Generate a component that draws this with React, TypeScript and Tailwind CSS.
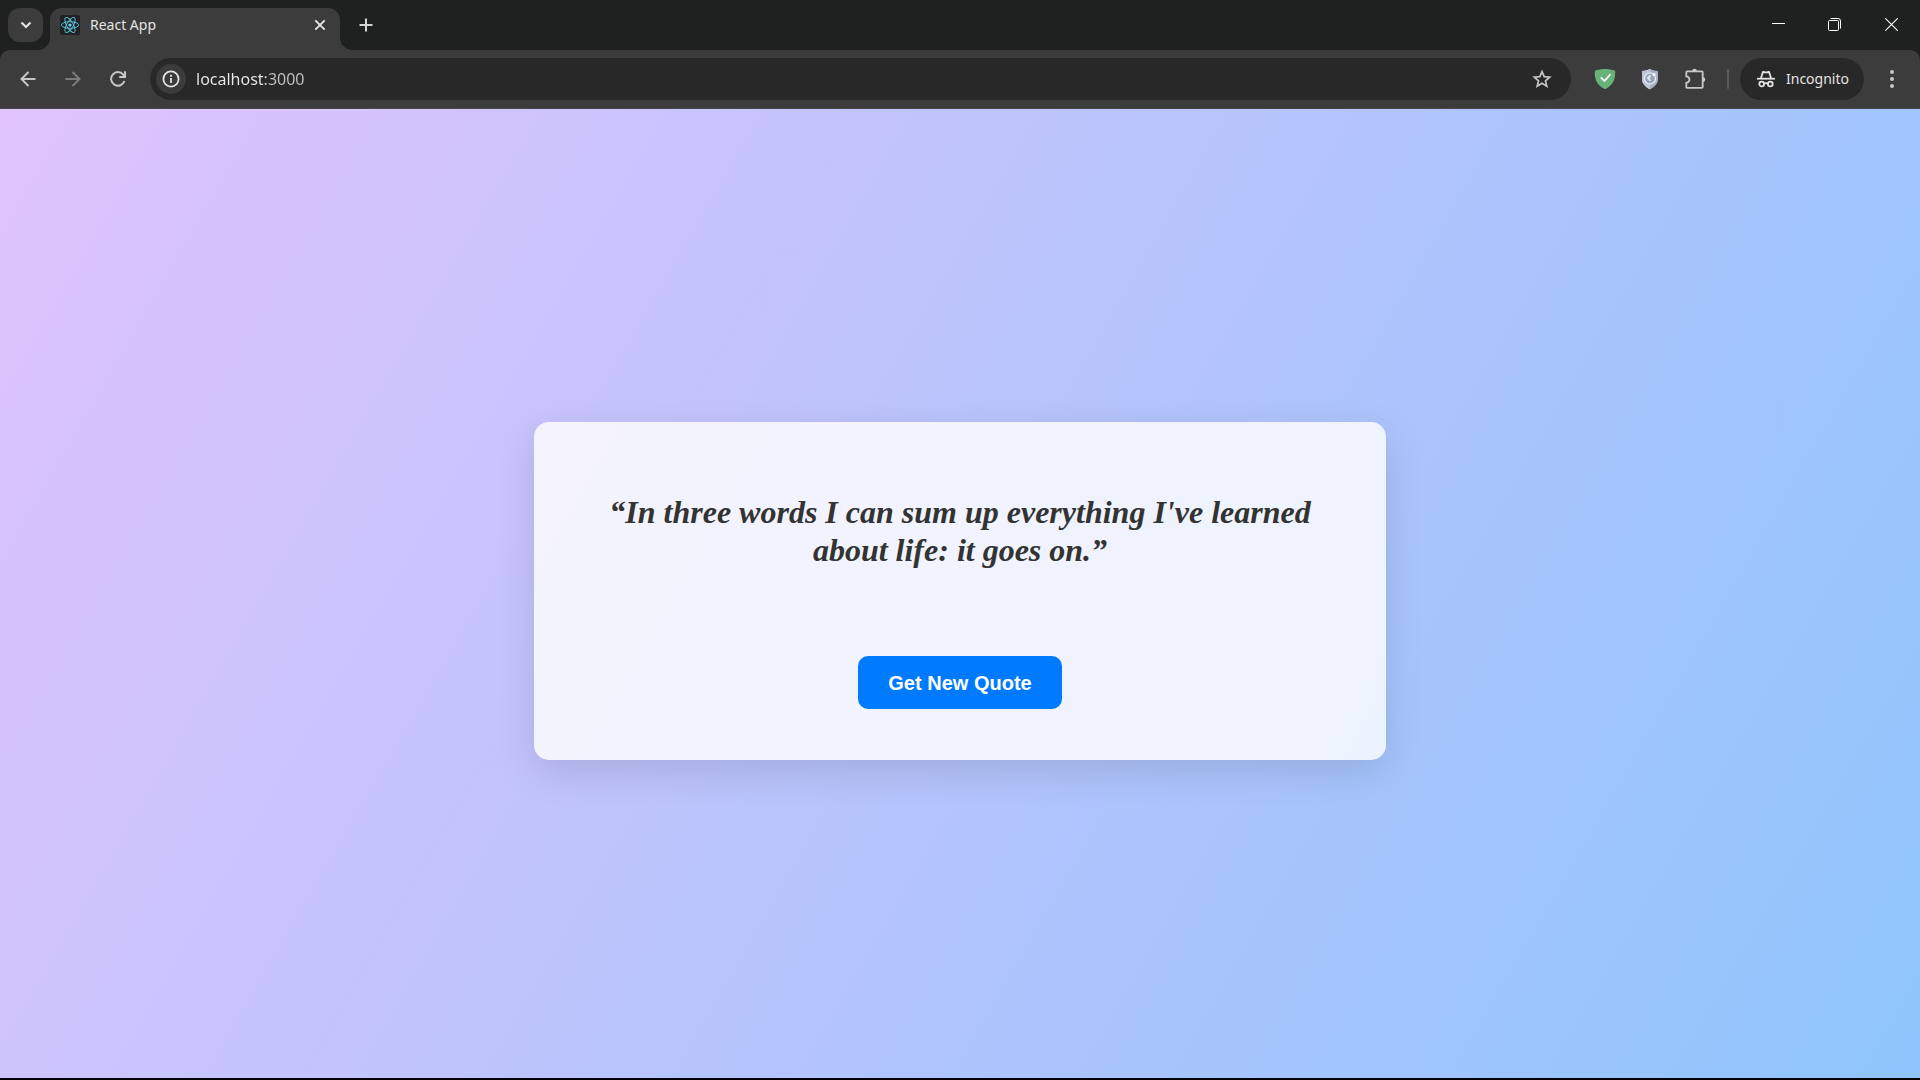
import React from "react";

const stroke = { fill: "none", stroke: "currentColor", strokeWidth: 2 } as const;

function ReactLogo() {
  return (
    <svg viewBox="0 0 20 20" className="size-5 shrink-0" aria-hidden="true">
      <rect width="20" height="20" rx="2" fill="#202122" />
      <g fill="none" stroke="#5bc8e0" strokeWidth="0.9">
        <ellipse cx="10" cy="10" rx="8.6" ry="3.3" />
        <ellipse cx="10" cy="10" rx="8.6" ry="3.3" transform="rotate(60 10 10)" />
        <ellipse cx="10" cy="10" rx="8.6" ry="3.3" transform="rotate(120 10 10)" />
      </g>
      <circle cx="10" cy="10" r="1.6" fill="#61dafb" />
    </svg>
  );
}

function IncognitoIcon() {
  return (
    <svg viewBox="0 0 18 18" className="size-[18px] shrink-0" {...stroke} strokeWidth={1.8} aria-hidden="true">
      <path d="M4 8 5.9 1.9 Q9 3 12.1 1.9 L14 8" strokeLinejoin="round" />
      <path d="M0 8.7H18" />
      <circle cx="4.7" cy="14" r="2.4" />
      <circle cx="13.3" cy="14" r="2.4" />
      <path d="M7 13.6Q9 12.6 11 13.6" />
    </svg>
  );
}

function TabStrip() {
  return (
    <div className="flex h-[50px] items-end bg-[#1f2121] pl-2">
      <button
        aria-label="Search tabs"
        className="mb-2 flex h-[34px] w-[35px] items-center justify-center rounded-xl bg-[#3c3c3c] text-[#e3e3e3]"
      >
        <svg viewBox="0 0 12 12" className="size-3" {...stroke} strokeWidth={2.2} aria-hidden="true">
          <path d="M1.5 3.5 6 8l4.5-4.5" />
        </svg>
      </button>

      <div className="relative ml-[7px] flex h-[42px] w-[290px] items-center rounded-t-xl bg-[#3c3c3c] pr-[10px] pb-2 pl-[10px] before:absolute before:bottom-0 before:-left-3 before:size-3 before:bg-[radial-gradient(circle_at_0_0,transparent_12px,#3c3c3c_12px)] after:absolute after:-right-3 after:bottom-0 after:size-3 after:bg-[radial-gradient(circle_at_100%_0,transparent_12px,#3c3c3c_12px)]">
        <ReactLogo />
        <span className="ml-[10px] flex-1 text-sm text-[#e3e3e3]">React App</span>
        <button aria-label="Close tab" className="flex size-5 items-center justify-center text-[#e8e8e8]">
          <svg viewBox="0 0 12 12" className="size-3" {...stroke} strokeWidth={1.8} aria-hidden="true">
            <path d="m1.3 1.3 9.4 9.4m0-9.4-9.4 9.4" />
          </svg>
        </button>
      </div>

      <button aria-label="New tab" className="mb-[11px] ml-3 flex size-7 items-center justify-center text-[#d5d5d5]">
        <svg viewBox="0 0 14 14" className="size-[14px]" {...stroke} aria-hidden="true">
          <path d="M7 .5v13M.5 7h13" />
        </svg>
      </button>

      <div className="ml-auto flex self-start text-white">
        <button aria-label="Minimize" className="flex h-[49px] w-14 items-center justify-center">
          <svg viewBox="0 0 13 13" className="size-[13px]" {...stroke} strokeWidth={1} aria-hidden="true">
            <path d="M0 5.5h13" />
          </svg>
        </button>
        <button aria-label="Restore" className="flex h-[49px] w-14 items-center justify-center">
          <svg viewBox="0 0 13 13" className="size-[13px]" {...stroke} strokeWidth={1} aria-hidden="true">
            <rect x=".5" y="2.5" width="10" height="10" rx="1" />
            <path d="M2.5 .5H10a2.5 2.5 0 0 1 2.5 2.5V10.5" />
          </svg>
        </button>
        <button aria-label="Close window" className="flex h-[49px] w-[58px] items-center justify-center">
          <svg viewBox="0 0 13 13" className="size-[13px]" {...stroke} strokeWidth={1.1} aria-hidden="true">
            <path d="m.3.3 12.4 12.4m0-12.4L.3 12.7" />
          </svg>
        </button>
      </div>
    </div>
  );
}

function Toolbar() {
  return (
    <div className="bg-[#1f2121]">
      <div className="flex h-[59px] items-center rounded-t-[10px] border-b border-[#484848] bg-[#3c3c3c] pr-2 pl-2">
        <div className="flex gap-[5px] text-[#c7c7c7]">
          <button aria-label="Back" className="flex size-10 items-center justify-center">
            <svg viewBox="0 0 16 16" className="size-4" {...stroke} aria-hidden="true">
              <path d="M15.5 8H2M8.5 1 1.5 8l7 7" />
            </svg>
          </button>
          <button aria-label="Forward" disabled className="flex size-10 items-center justify-center text-[#7b7b7b]">
            <svg viewBox="0 0 16 16" className="size-4" {...stroke} aria-hidden="true">
              <path d="M.5 8H14M7.5 1l7 7-7 7" />
            </svg>
          </button>
          <button aria-label="Reload" className="flex size-10 items-center justify-center">
            <svg viewBox="0 0 16 16" className="size-4" {...stroke} aria-hidden="true">
              <path d="M14.4 10A6.8 6.8 0 1 1 13.2 3.6L14.6 5.4" />
              <path d="M15 .3V6H9.2" />
            </svg>
          </button>
        </div>

        <div className="ml-3 flex h-[42px] flex-1 items-center rounded-full bg-[#282828] pr-[9px] pl-[6px]">
          <button
            aria-label="View site information"
            className="flex size-[30px] items-center justify-center rounded-full bg-[#3c3c3c] text-[#e3e3e3]"
          >
            <svg viewBox="0 0 18 18" className="size-[18px]" {...stroke} strokeWidth={1.8} aria-hidden="true">
              <circle cx="9" cy="9" r="7.6" />
              <path d="M9 8v5M9 4.8v1.9" />
            </svg>
          </button>
          <input
            aria-label="Address"
            defaultValue="localhost:3000"
            className="ml-[10px] min-w-0 flex-1 bg-[linear-gradient(90deg,#ececec_68px,#c4c4c4_68px)] bg-clip-text text-base text-transparent caret-white outline-none"
          />
          <button aria-label="Bookmark this tab" className="flex size-10 items-center justify-center text-[#c7c7c7]">
            <svg viewBox="0 0 20 20" className="size-5" {...stroke} strokeWidth={1.7} aria-hidden="true">
              <path d="m10 2.6 2.2 5.1 5.5.5-4.2 3.6 1.3 5.4-4.8-2.9-4.8 2.9 1.3-5.4-4.2-3.6 5.5-.5z" />
            </svg>
          </button>
        </div>

        <div className="ml-[14px] flex items-center gap-[5px] text-[#c7c7c7]">
          <button aria-label="Ad blocker" className="flex size-10 items-center justify-center">
            <svg viewBox="0 0 22 22" className="size-[22px]" aria-hidden="true">
              <path d="M11 1C7.500 1 4 1.600.8 2.700c0 6-.3 13 10.200 18.600C21.500 15.700 21.200 8.700 21.200 2.700 18 1.600 14.500 1 11 1z" fill="#67b279" />
              <path d="m6.800 9.300 3.700 3.800 6-7" fill="none" stroke="#fff" strokeWidth="1.700" />
            </svg>
          </button>
          <button aria-label="Privacy shield" className="flex size-10 items-center justify-center">
            <svg viewBox="0 0 22 22" className="size-[22px]" aria-hidden="true">
              <path d="M11 .8C9 2.200 6 2.800 3 2.900v8.600c0 4.200 3.500 7.500 8 9.800 4.500-2.300 8-5.600 8-9.800V2.900C16 2.800 13 2.200 11 .8z" fill="#aab1c4" />
              <path d="M11 .8C9 2.200 6 2.800 3 2.900v8.600c0 4.200 3.500 7.500 8 9.800z" fill="#bfc5d4" />
              <circle cx="11" cy="10.500" r="5.500" fill="#97a3bd" stroke="#eef1f6" strokeWidth="1.200" />
              <path d="M8 9.500c1-2 3-2.500 4.500-2l-1.500 2.500 1 3c-2 .5-3.500-1-4-3.500z" fill="#dde2ec" />
              <circle cx="15" cy="6.500" r="1.600" fill="#f3f5f9" />
            </svg>
          </button>
          <button aria-label="Extensions" className="flex size-10 items-center justify-center">
            <svg viewBox="0 0 22 22" className="size-[22px]" {...stroke} strokeWidth={1.8} aria-hidden="true">
              <path d="M3.200 3.300H17.800a.9.900 0 0 1 .9.900V19a.9.900 0 0 1-.9.900H3.200a.9.900 0 0 1-.9-.9V14.800c4.200-.5 4.200-5.900 0-6.400V4.200a.9.900 0 0 1 .9-.9z" />
              <path d="M8.300 3a2.300 2.300 0 0 1 4.600 0zM19 9.300a2.300 2.300 0 0 1 0 4.600z" fill="currentColor" stroke="none" />
            </svg>
          </button>
        </div>

        <div className="ml-3 h-5 w-0.5 rounded-full bg-[#5c5c5c]" />

        <button className="ml-[11px] flex h-[42px] items-center gap-[11px] rounded-full bg-[#282828] pr-[15px] pl-[17px] text-sm text-[#e3e3e3]">
          <IncognitoIcon />
          Incognito
        </button>
        <button aria-label="Menu" className="ml-2 flex size-10 items-center justify-center text-[#c7c7c7]">
          <svg viewBox="0 0 4 18" className="h-[18px] w-1" fill="currentColor" aria-hidden="true">
            <circle cx="2" cy="2" r="2" />
            <circle cx="2" cy="9" r="2" />
            <circle cx="2" cy="16" r="2" />
          </svg>
        </button>
      </div>
    </div>
  );
}

export default function App() {
  return (
    <div className="flex min-h-screen flex-col border-b-2 border-black font-['Noto_Sans',sans-serif]">
      <header>
        <TabStrip />
        <Toolbar />
      </header>
      <main className="flex flex-1 items-center justify-center bg-[linear-gradient(120deg,#e0c3fc_0%,#8ec5fc_100%)] px-4 pb-[5px]">
        <section className="flex w-full max-w-[852px] flex-col items-center rounded-[15px] bg-white/80 px-[62px] pt-[71px] pb-[51px] text-center shadow-[0_12px_38px_rgba(0,0,0,0.12)]">
          <h1 className="font-['Liberation_Serif',serif] text-[32px] leading-[38px] font-bold text-[#333333] italic">
            “In three words I can sum up everything I've learned about life: it goes on.”
          </h1>
          <button className="mt-[87px] h-[53px] rounded-[10px] bg-[#007bff] px-[30px] font-['Liberation_Sans',sans-serif] text-xl font-bold text-white">
            Get New Quote
          </button>
        </section>
      </main>
    </div>
  );
}
